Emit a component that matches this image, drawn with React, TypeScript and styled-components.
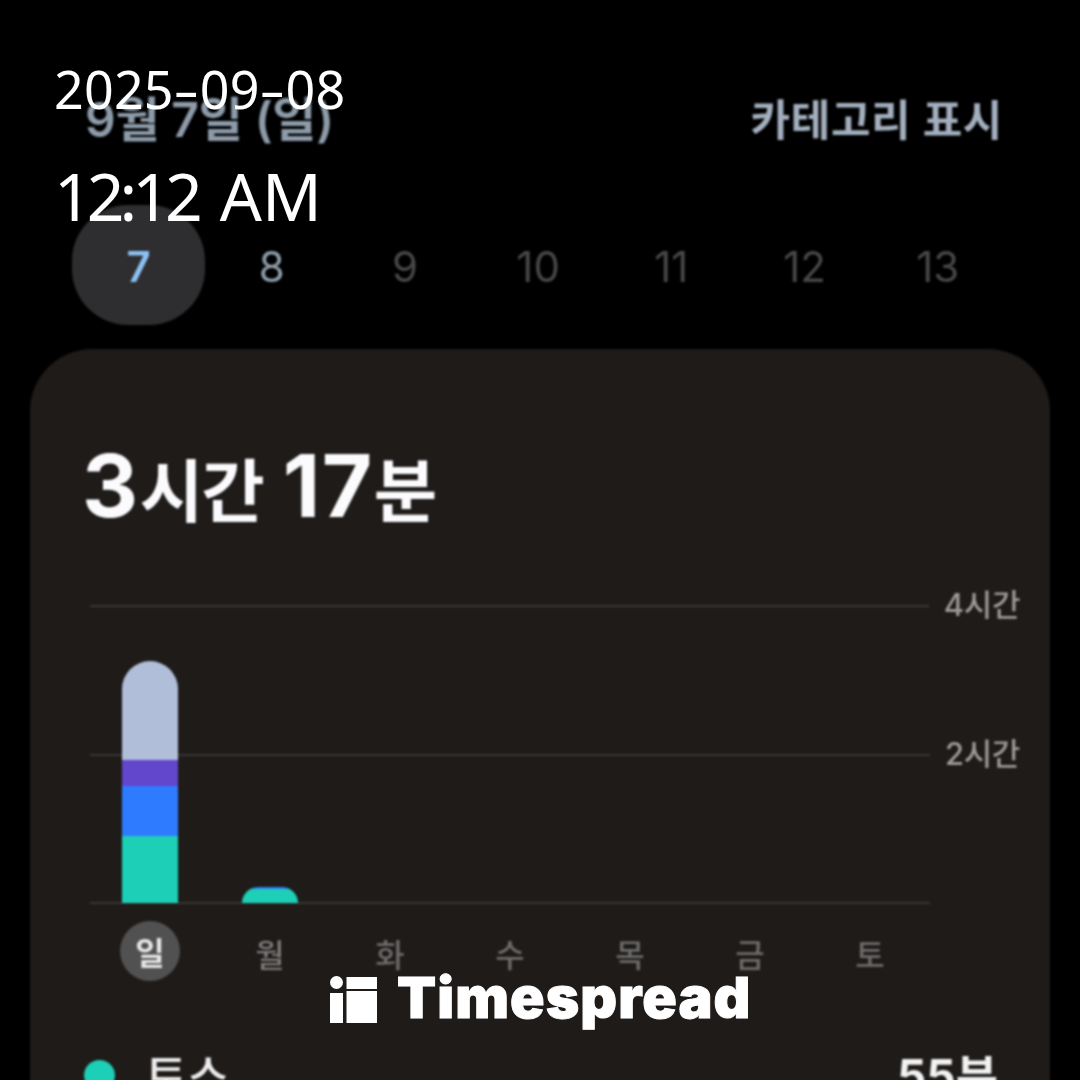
import React from "react";
import styled, { createGlobalStyle } from "styled-components";

const KR = `Inter, "Noto Sans CJK KR", sans-serif`;

const Global = createGlobalStyle`
  html, body { margin: 0; padding: 0; background: #000; }
`;

const Page = styled.div`
  position: relative;
  width: 1080px;
  height: 1080px;
  overflow: hidden;
  background: #000;
  font-family: ${KR};
`;

const Screen = styled.div`
  display: flex;
  flex-direction: column;
  padding-top: 88px;
  filter: blur(0.8px);
`;

const Header = styled.header`
  display: flex;
  justify-content: space-between;
  align-items: center;
  height: 56px;
  padding: 0 77px 0 85px;
`;

const DateTitle = styled.h1`
  margin: 0;
  font-size: 48px;
  font-weight: 600;
  letter-spacing: -0.2px;
  color: #8d9ba9;
`;

const CategoryToggle = styled.span`
  font-size: 43px;
  font-weight: 600;
  letter-spacing: 0.6px;
  color: #a3afbe;
  padding-top: 2px;
`;

const DateStrip = styled.div`
  display: grid;
  grid-template-columns: repeat(7, 133.2px);
  margin: 61px 0 24px 72px;
`;

const DateCell = styled.div<{ $tone: string; $active?: boolean }>`
  height: 120px;
  display: flex;
  align-items: center;
  justify-content: center;
  padding-top: 2px;
  box-sizing: border-box;
  font-size: 42px;
  font-weight: ${(p) => (p.$active ? 600 : 400)};
  color: ${(p) => p.$tone};
  background: ${(p) => (p.$active ? "#2e2e30" : "transparent")};
  border-radius: 56px;
`;

const Card = styled.section`
  margin: 0 30px;
  height: 800px;
  padding: 92px 30px 0 55px;
  box-sizing: border-box;
  background: #1e1b19;
  border-radius: 62px 62px 0 0;
`;

const Total = styled.div`
  display: flex;
  align-items: baseline;
  height: 90px;
  margin-left: -3px;
  color: #fbfbfd;
  font-weight: 700;
`;

const TotalNumber = styled.span`
  font-size: 87px;
  line-height: 90px;
  letter-spacing: 1.5px;
`;

const TotalUnit = styled.span`
  font-size: 69px;
  line-height: 90px;
  margin-right: 20px;
  letter-spacing: -2px;
`;

const Plot = styled.div`
  position: relative;
  margin: 74px 0 0 5px;
  height: 299px;
  display: flex;
  flex-direction: column;
  justify-content: space-between;
`;

const GridRow = styled.div`
  display: flex;
  align-items: center;
  height: 2px;
  gap: 15px;
`;

const GridLine = styled.div`
  width: 840px;
  height: 2px;
  background: #383634;
`;

const GridLabel = styled.span`
  font-size: 31px;
  font-weight: 500;
  padding-bottom: 7px;
  color: #9b9a99;
  white-space: nowrap;
  letter-spacing: -0.4px;
`;

const Bars = styled.div`
  position: absolute;
  left: 0;
  bottom: 1px;
  width: 840px;
  height: 242px;
  padding-left: 32px;
  box-sizing: border-box;
  display: grid;
  grid-template-columns: repeat(7, 120px);
  align-items: end;
`;

const Bar = styled.div<{ $radius: number }>`
  width: 56px;
  display: flex;
  flex-direction: column;
  overflow: hidden;
  border-radius: ${(p) => p.$radius}px ${(p) => p.$radius}px 0 0;
`;

const Segment = styled.div<{ $color: string; $height: number }>`
  height: ${(p) => p.$height}px;
  background: ${(p) => p.$color};
`;

const Weekdays = styled.div`
  display: grid;
  grid-template-columns: repeat(7, 120px);
  margin: 17px 0 0 5px;
`;

const Weekday = styled.div<{ $active?: boolean; $tone?: string }>`
  width: 60px;
  height: 60px;
  margin-left: 30px;
  padding-top: ${(p) => (p.$active ? 0 : 4)}px;
  box-sizing: border-box;
  display: flex;
  align-items: center;
  justify-content: center;
  border-radius: 50%;
  font-size: 32px;
  font-weight: ${(p) => (p.$active ? 700 : 500)};
  background: ${(p) => (p.$active ? "#515151" : "transparent")};
  color: ${(p) => (p.$active ? "#e6e6e6" : p.$tone)};
`;

const LegendRow = styled.div`
  display: flex;
  align-items: center;
  margin: 59px 22px 0 -1px;
`;

const LegendDot = styled.span<{ $color: string }>`
  width: 31px;
  height: 31px;
  margin-top: 4px;
  border-radius: 50%;
  background: ${(p) => p.$color};
`;

const LegendName = styled.span`
  margin-left: 30px;
  font-size: 46px;
  font-weight: 500;
  color: #ececec;
`;

const LegendValue = styled.span`
  margin-left: auto;
  font-size: 46px;
  font-weight: 700;
  color: #f2f2f2;
`;

const Stamp = styled.div`
  position: absolute;
  left: 54px;
  top: 51px;
  display: flex;
  flex-direction: column;
  color: #fff;
  font-family: "Noto Sans", sans-serif;
  font-weight: 400;
`;

const StampDate = styled.div`
  font-size: 52px;
  line-height: 76px;
  letter-spacing: 0.2px;
`;

const StampDash = styled.span`
  display: inline-block;
  margin: 0 4.5px;
  transform: scaleX(1.55);
`;

const StampTime = styled.div`
  font-size: 66px;
  line-height: 90px;
  margin-top: 23px;
`;

const StampClock = styled.span`
  letter-spacing: -5px;
  margin-right: 5px;
`;

const Watermark = styled.div`
  position: absolute;
  left: 330px;
  top: 965px;
  display: flex;
  align-items: center;
  gap: 19px;
  color: #fff;
`;

const WatermarkIcon = styled.svg`
  margin-top: 2px;
`;

const WatermarkText = styled.span`
  font-family: Inter, sans-serif;
  font-size: 57px;
  line-height: 66px;
  font-weight: 900;
  letter-spacing: 1.1px;
  -webkit-text-stroke: 1px #fff;
`;

const dates = [
  { n: 7, tone: "#8cc2f4", active: true },
  { n: 8, tone: "#8e9dab" },
  { n: 9, tone: "#474747" },
  { n: 10, tone: "#474747" },
  { n: 11, tone: "#474747" },
  { n: 12, tone: "#474747" },
  { n: 13, tone: "#474747" },
];

const sunday = [
  { color: "#b0bed9", height: 99 },
  { color: "#6247cd", height: 26 },
  { color: "#2f7bff", height: 50 },
  { color: "#1ccfb6", height: 67 },
];

const monday = [
  { color: "#2f7bff", height: 2 },
  { color: "#1ccfb6", height: 14 },
];

const days = [
  { d: "일", active: true },
  { d: "월", tone: "#7d7c7b" },
  { d: "화", tone: "#6d6c6b" },
  { d: "수", tone: "#6d6c6b" },
  { d: "목", tone: "#6d6c6b" },
  { d: "금", tone: "#6d6c6b" },
  { d: "토", tone: "#6d6c6b" },
];

export default function App() {
  return (
    <Page>
      <Global />
      <Screen>
        <Header>
          <DateTitle>9월 7일 (일)</DateTitle>
          <CategoryToggle>카테고리 표시</CategoryToggle>
        </Header>
        <DateStrip>
          {dates.map((x) => (
            <DateCell key={x.n} $tone={x.tone} $active={x.active}>
              {x.n}
            </DateCell>
          ))}
        </DateStrip>
        <Card>
          <Total>
            <TotalNumber>3</TotalNumber>
            <TotalUnit>시간</TotalUnit>
            <TotalNumber>17</TotalNumber>
            <TotalUnit>분</TotalUnit>
          </Total>
          <Plot>
            <GridRow>
              <GridLine />
              <GridLabel>4시간</GridLabel>
            </GridRow>
            <GridRow>
              <GridLine />
              <GridLabel>2시간</GridLabel>
            </GridRow>
            <GridRow>
              <GridLine />
            </GridRow>
            <Bars>
              <Bar $radius={28}>
                {sunday.map((s) => (
                  <Segment key={s.color} $color={s.color} $height={s.height} />
                ))}
              </Bar>
              <Bar $radius={16}>
                {monday.map((s) => (
                  <Segment key={s.color} $color={s.color} $height={s.height} />
                ))}
              </Bar>
            </Bars>
          </Plot>
          <Weekdays>
            {days.map((x) => (
              <Weekday key={x.d} $active={x.active} $tone={x.tone}>
                {x.d}
              </Weekday>
            ))}
          </Weekdays>
          <LegendRow>
            <LegendDot $color="#1ccfb6" />
            <LegendName>토스</LegendName>
            <LegendValue>55분</LegendValue>
          </LegendRow>
        </Card>
      </Screen>
      <Stamp>
        <StampDate>
          2025<StampDash>-</StampDash>09<StampDash>-</StampDash>08
        </StampDate>
        <StampTime>
          <StampClock>12:12</StampClock> AM
        </StampTime>
      </Stamp>
      <Watermark>
        <WatermarkIcon width="48" height="47" viewBox="0 0 48 47" aria-hidden="true">
          <circle cx="6.5" cy="6.5" r="6.5" fill="#fff" />
          <rect x="0" y="17" width="13" height="30" fill="#fff" />
          <rect x="16.5" y="1" width="30.5" height="12" fill="#fff" />
          <rect x="16.5" y="15" width="30.5" height="32" fill="#fff" />
        </WatermarkIcon>
        <WatermarkText>Timespread</WatermarkText>
      </Watermark>
    </Page>
  );
}
